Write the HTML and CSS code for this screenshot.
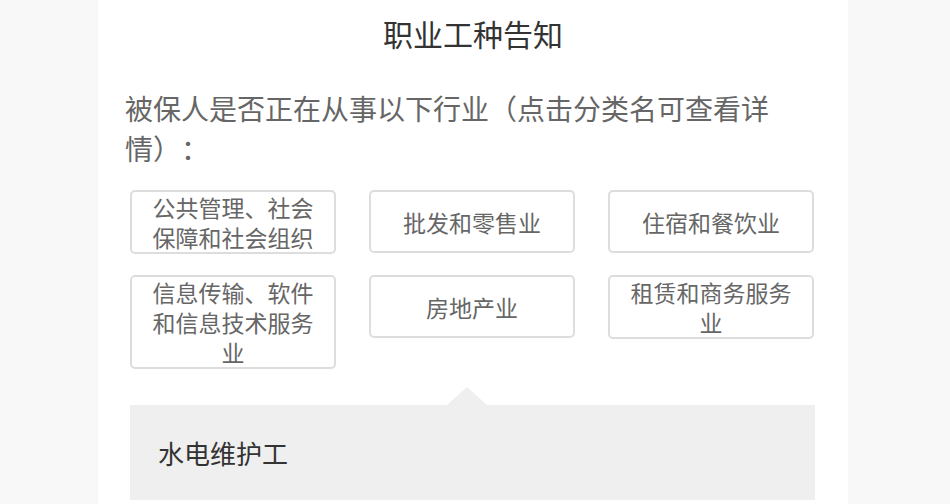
FILE: index.html
```html
<!DOCTYPE html>
<html lang="zh-CN">
<head>
<meta charset="utf-8">
<title>职业工种告知</title>
<link rel="stylesheet" href="styles.css">
</head>
<body>
<div class="page">
  <h1 class="title">职业工种告知</h1>
  <p class="question">被保人是否正在从事以下行业（点击分类名可查看详情）：</p>
  <div class="grid">
    <div class="cat">公共管理、社会保障和社会组织</div>
    <div class="cat">批发和零售业</div>
    <div class="cat">住宿和餐饮业</div>
    <div class="cat">信息传输、软件和信息技术服务业</div>
    <div class="cat">房地产业</div>
    <div class="cat">租赁和商务服务业</div>
  </div>
  <div class="panel">
    <div class="job">水电维护工</div>
  </div>
</div>
</body>
</html>
```
FILE: styles.css
```css
html, body {
  margin: 0;
  padding: 0;
}
body {
  background: #f8f8f8;
  font-family: "Noto Sans CJK SC", "Noto Sans", sans-serif;
  text-spacing-trim: space-all;
}
.page {
  width: 750px;
  margin-left: 98px;
  min-height: 504px;
  background: #fff;
  padding: 13px 27px 0;
  box-sizing: border-box;
}
.title {
  margin: 0;
  font-size: 30px;
  font-weight: normal;
  line-height: 40px;
  color: #333;
  text-align: center;
}
.question {
  margin: 35px 0 0;
  width: 660px;
  font-size: 28px;
  line-height: 40px;
  color: #666;
}
.grid {
  margin: 22px 0 0 5px;
  display: grid;
  grid-template-columns: 206px 206px 206px;
  column-gap: 33px;
  row-gap: 21px;
  align-items: start;
}
.cat {
  box-sizing: border-box;
  min-height: 63px;
  border: 2px solid #ddd;
  border-radius: 5px;
  padding: 0 12px;
  font-size: 23px;
  line-height: 30px;
  color: #666;
  text-align: center;
  display: flex;
  align-items: center;
  justify-content: center;
}
.panel {
  position: relative;
  margin: 36px 0 0 5px;
  width: 685px;
  height: 95px;
  background: #efefef;
  box-sizing: border-box;
  padding: 30px 0 0 28px;
}
.panel::before {
  content: "";
  position: absolute;
  bottom: 100%;
  left: 317px;
  width: 0;
  height: 0;
  border-left: 20px solid transparent;
  border-right: 20px solid transparent;
  border-bottom: 18px solid #efefef;
}
.job {
  font-size: 26px;
  line-height: 36px;
  color: #333;
}
```
